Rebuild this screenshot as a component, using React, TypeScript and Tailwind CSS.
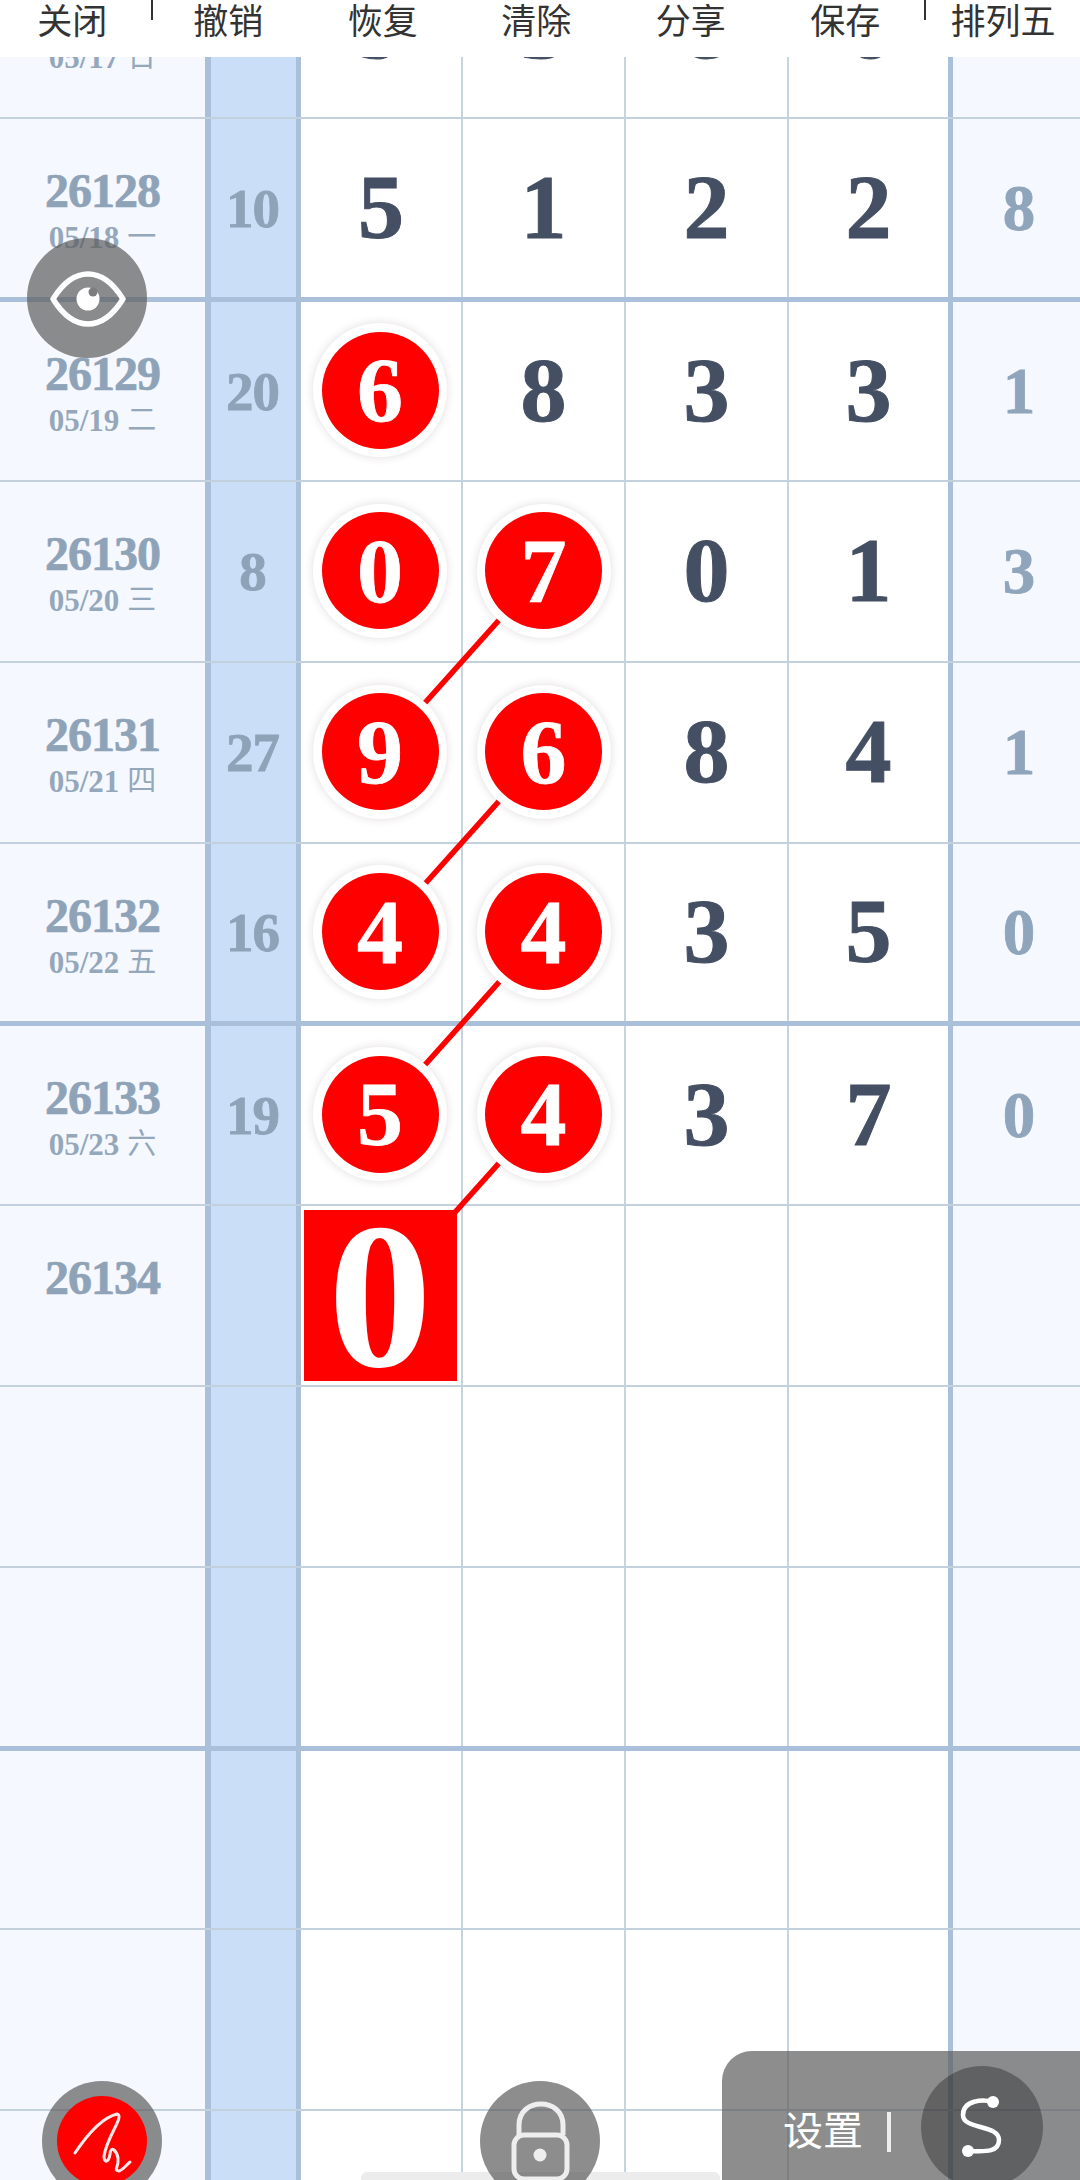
const serif = { fontFamily: '"Liberation Serif", "Noto Sans CJK SC", serif' };

type Ball = { v: string; hit?: boolean };
type Row = {
	issue: string;
	date: string;
	day: string;
	sum: string;
	balls: Ball[];
	last: string;
	h: string;
	thick?: boolean;
	next?: boolean;
};

const n = (s: string): Ball[] => s.split('').map((c) => ({ v: c }));
const hit = (v: string): Ball => ({ v, hit: true });

const rows: Row[] = [
	{ issue: '26127', date: '05/17', day: '日', sum: '19', balls: n('9386'), last: '6', h: 'h-[180px]' },
	{ issue: '26128', date: '05/18', day: '一', sum: '10', balls: n('5122'), last: '8', h: 'h-[183px]', thick: true },
	{ issue: '26129', date: '05/19', day: '二', sum: '20', balls: [hit('6'), ...n('833')], last: '1', h: 'h-[180px]' },
	{ issue: '26130', date: '05/20', day: '三', sum: '8', balls: [hit('0'), hit('7'), ...n('01')], last: '3', h: 'h-[181px]' },
	{ issue: '26131', date: '05/21', day: '四', sum: '27', balls: [hit('9'), hit('6'), ...n('84')], last: '1', h: 'h-[181px]' },
	{ issue: '26132', date: '05/22', day: '五', sum: '16', balls: [hit('4'), hit('4'), ...n('35')], last: '0', h: 'h-[182px]', thick: true },
	{ issue: '26133', date: '05/23', day: '六', sum: '19', balls: [hit('5'), hit('4'), ...n('37')], last: '0', h: 'h-[180px]' },
	{ issue: '26134', date: '', day: '', sum: '', balls: [hit('0'), ...n('   ')], last: '', h: 'h-[181px]', next: true },
	{ issue: '', date: '', day: '', sum: '', balls: n('    '), last: '', h: 'h-[181px]' },
	{ issue: '', date: '', day: '', sum: '', balls: n('    '), last: '', h: 'h-[183px]', thick: true },
	{ issue: '', date: '', day: '', sum: '', balls: n('    '), last: '', h: 'h-[179px]' },
	{ issue: '', date: '', day: '', sum: '', balls: n('    '), last: '', h: 'h-[181px]' },
	{ issue: '', date: '', day: '', sum: '', balls: n('    '), last: '', h: 'h-[181px]' },
];

const menu = [
	{ label: '关闭', w: 'w-[145px]' },
	{ tick: true, w: 'ml-[6px]' },
	{ label: '撤销', w: 'w-[152px]' },
	{ label: '恢复', w: 'w-[158px]' },
	{ label: '清除', w: 'w-[150px]' },
	{ label: '分享', w: 'w-[160px]' },
	{ label: '保存', w: 'w-[150px]' },
	{ tick: true, w: 'ml-[4px]' },
	{ label: '排列五', w: 'w-[154px] shrink-0' },
];

const ballCols = [
	'border-r-2 border-r-[#c6d4de]',
	'border-r-2 border-r-[#c6d4de]',
	'border-r-2 border-r-[#c6d4de]',
	'border-r-[5px] border-r-[#a9bfda]',
];

function BallCell({ ball, next, col }: { ball: Ball; next?: boolean; col: number }) {
	return (
		<div className={`flex items-center justify-center bg-white ${ballCols[col]}`}>
			{ball.hit && next ? (
				<div className="relative z-10 mr-[2px] flex h-[171px] w-[153px] items-center justify-center bg-[#ff0000] pt-[2px] text-[207px] font-bold leading-none text-white">
					{ball.v}
				</div>
			) : ball.hit ? (
				<div
					className={`relative z-10 -mt-[2px] flex h-[134px] w-[134px] items-center justify-center rounded-full bg-white shadow-[0_0_8px_rgba(120,90,90,0.22)] ${col === 0 ? 'mr-[2px]' : ''}`}
				>
					<div className="flex h-[117px] w-[117px] items-center justify-center rounded-full bg-[#ff0000] text-[92px] font-bold leading-none text-white [-webkit-text-stroke:0.8px_#ffffff]">
						{ball.v}
					</div>
				</div>
			) : (
				<span className="-mt-[3px] text-[92px] font-bold leading-none text-[#444f63] [-webkit-text-stroke:1px_#444f63]">
					{ball.v}
				</span>
			)}
		</div>
	);
}

function TableRow({ row }: { row: Row }) {
	const line = row.thick ? 'border-b-[5px] border-b-[#a9bfda]' : 'border-b-2 border-b-[#c3d1de]';
	return (
		<div className={`grid grid-cols-[211px_90px_162px_163px_163px_164px_132px] ${row.h} ${line}`}>
			<div className="flex flex-col items-center border-r-[6px] border-r-[#a9bfda] bg-[#f5f8ff] pt-[48px] font-bold text-[#8fa3b8]">
				<div className="h-[48px] text-[48px] leading-none tracking-[-1px] [-webkit-text-stroke:0.7px_#8fa3b8]">
					{row.issue}
				</div>
				{row.date && (
					<div className="mt-[7px] flex items-center gap-[8px] text-[31px] leading-none text-[#94a7bb]">
						<span>{row.date}</span>
						<span className="text-[29px] font-normal">{row.day}</span>
					</div>
				)}
			</div>
			<div className="flex items-center justify-center border-r-[5px] border-r-[#a9bfda] bg-[#cbdef7] pr-[2px] text-[55px] font-bold leading-none tracking-[-1px] text-[#8fa3b8] [-webkit-text-stroke:0.8px_#8fa3b8]">
				{row.sum}
			</div>
			{row.balls.map((ball, i) => (
				<BallCell key={i} ball={ball} next={row.next} col={i} />
			))}
			<div className="flex items-center justify-center bg-[#f5f8ff] text-[65px] font-bold leading-none text-[#8fa5bc] [-webkit-text-stroke:0.8px_#8fa5bc]">
				{row.last}
			</div>
		</div>
	);
}

export default function App() {
	return (
		<div className="relative h-[2180px] w-[1080px] overflow-hidden bg-white" style={serif}>
			<div
				className="relative z-20 flex h-[57px] items-start bg-white text-[35px] leading-[38px] text-[#333333]"
				style={{ fontFamily: '"Noto Sans CJK SC", sans-serif' }}
			>
				{menu.map((item, i) =>
					item.tick ? (
						<div key={i} className={`h-[20px] w-[2px] shrink-0 bg-[#333333] ${item.w}`} />
					) : (
						<div key={i} className={`text-center ${item.w}`}>
							{item.label}
						</div>
					)
				)}
			</div>

			<div className="h-[2123px] overflow-hidden">
				<div className="-mt-[118px]">
					{rows.map((row, i) => (
						<TableRow key={i} row={row} />
					))}
				</div>
			</div>

			{/* lines joining the hit balls */}
			<svg className="absolute left-0 top-0 z-[5]" width="1080" height="2180">
				<g stroke="#ff0000" strokeWidth="5.5">
					<line x1="543" y1="571" x2="381" y2="752" />
					<line x1="543" y1="752" x2="381" y2="933" />
					<line x1="543" y1="933" x2="381" y2="1114" />
					<line x1="543" y1="1114" x2="381" y2="1295" />
				</g>
			</svg>

			<div className="absolute bottom-0 left-[361px] h-[8px] w-[359px] rounded-t-[6px] bg-[#ececec]" />

			{/* eye toggle */}
			<div className="absolute left-[27px] top-[238px] z-30 h-[120px] w-[120px] rounded-full bg-[#5c5c5c]/70">
				<svg width="120" height="120" viewBox="0 0 120 120">
					<path
						d="M26 61 C36 45 48 36 61 36 C74 36 86 45 96 61 C86 77 74 86 61 86 C48 86 36 77 26 61 Z"
						fill="none"
						stroke="#fff"
						strokeWidth="5.5"
						strokeLinejoin="round"
					/>
					<circle cx="61" cy="61" r="11.5" fill="#fff" />
					<circle cx="66" cy="54" r="4.5" fill="#7d7d7f" />
				</svg>
			</div>

			{/* pen */}
			<div className="absolute left-[42px] top-[2081px] z-30 flex h-[120px] w-[120px] items-center justify-center rounded-full bg-[#5c5c5c]/70">
				<div className="h-[90px] w-[90px] rounded-full bg-[#ff0000]">
					<svg width="90" height="90" viewBox="0 0 90 90">
						<path
							d="M18 57 C28 42 44 22 60 18 C68 20 50 40 47 60 C47 68 52 66 53 58 C54 48 60 56 61 62 C62 72 56 74 62 75 C66 74 70 68 73 66"
							fill="none"
							stroke="#ffe9e9"
							strokeWidth="3"
							strokeLinecap="round"
						/>
					</svg>
				</div>
			</div>

			{/* lock */}
			<div className="absolute left-[480px] top-[2081px] z-30 h-[120px] w-[120px] rounded-full bg-[#5c5c5c]/70">
				<svg width="120" height="120" viewBox="0 0 120 120">
					<path d="M39 54 V44 C39 16 83 16 83 44 V54" fill="none" stroke="#eeeeee" strokeWidth="5" />
					<rect x="34" y="54" width="53" height="44" rx="10" fill="none" stroke="#eeeeee" strokeWidth="5" />
					<circle cx="60" cy="74" r="6.5" fill="#eeeeee" />
				</svg>
			</div>

			{/* settings panel */}
			<div className="absolute left-[722px] top-[2051px] z-30 flex h-[129px] w-[358px] items-start rounded-tl-[30px] bg-[#5c5c5c]/70 pl-[61px] pt-[53px] text-white">
				<span className="text-[40px] leading-[48px]" style={{ fontFamily: '"Noto Sans CJK SC", sans-serif' }}>
					设置
				</span>
				<div className="ml-[24px] mt-[8px] h-[40px] w-[4px] bg-[#eeeeee]" />
				<div className="ml-[30px] -mt-[38px] flex h-[122px] w-[122px] shrink-0 items-center justify-center rounded-full bg-black/30">
					<svg width="122" height="122" viewBox="0 0 122 122">
						<path
							d="M72 36 C62 33 42 34 42 49 C42 64 78 58 78 74 C78 88 60 85 47 85"
							fill="none"
							stroke="#fff"
							strokeWidth="4.5"
						/>
						<circle cx="72" cy="36" r="6" fill="#fff" />
						<circle cx="47" cy="85" r="6" fill="#fff" />
					</svg>
				</div>
			</div>
		</div>
	);
}
